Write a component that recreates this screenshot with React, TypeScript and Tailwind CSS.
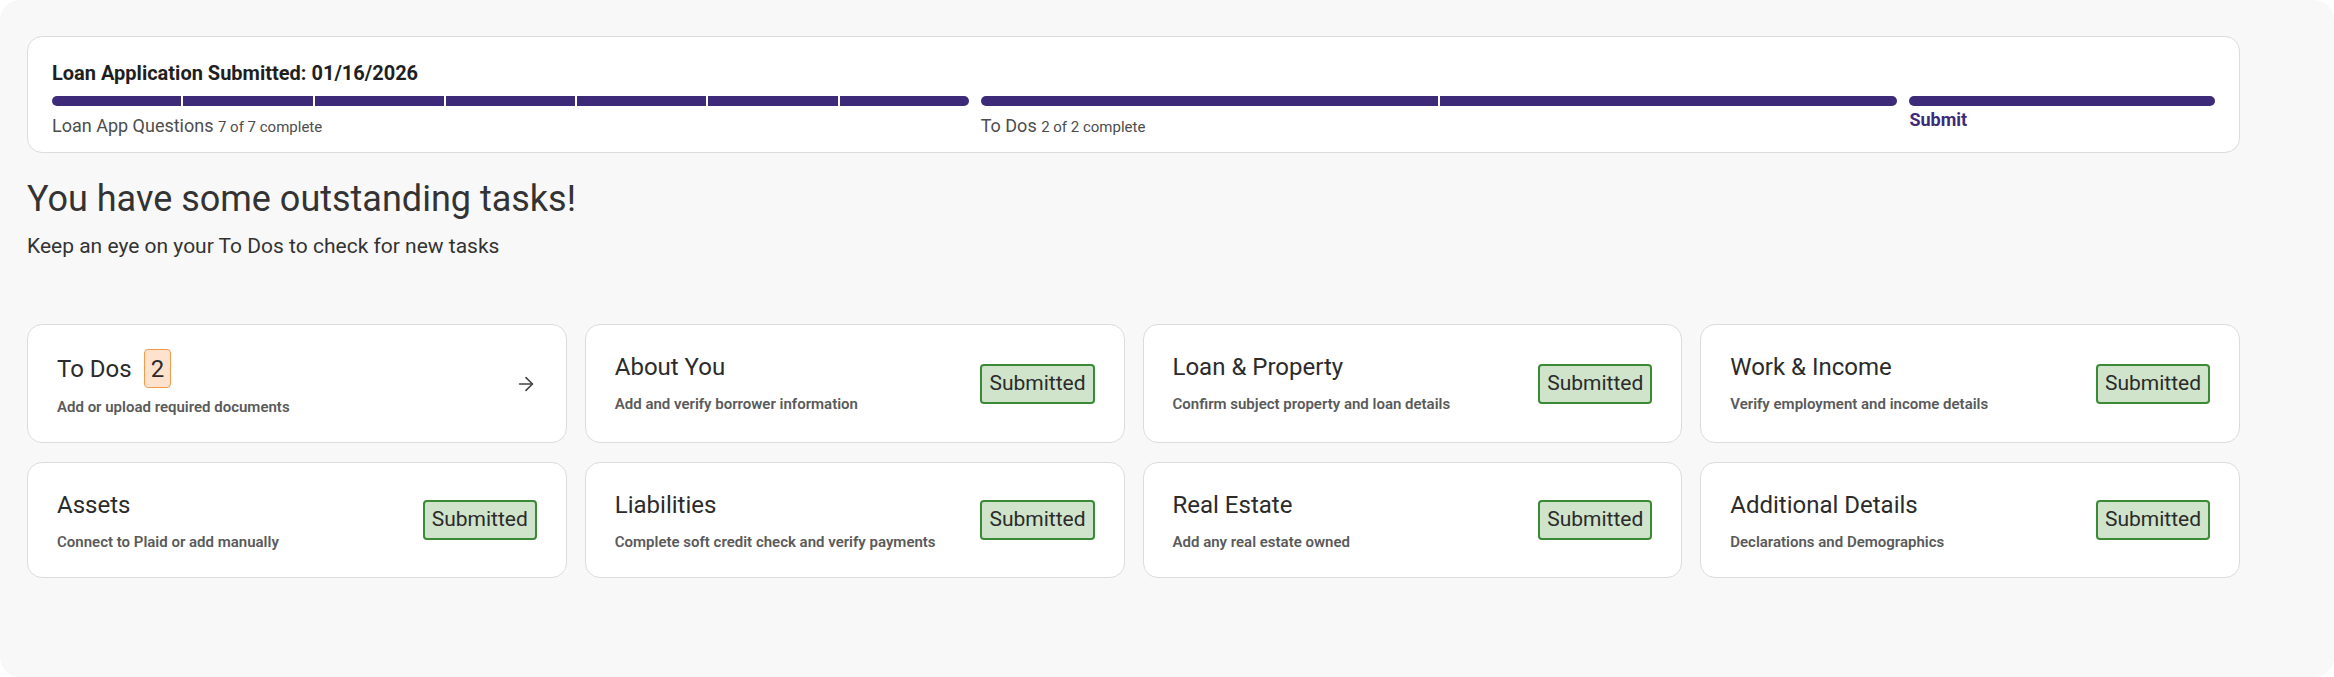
import React from 'react'
import { ArrowRight } from 'lucide-react'

interface TaskCardProps {
  title: string
  description: string
  count?: number
  submitted?: boolean
}

const ProgressTrack = ({ segments }: { segments: number }) => (
  <div className="flex h-[10px] gap-[2px] overflow-hidden rounded-full">
    {Array.from({ length: segments }).map((_, i) => (
      <div key={i} className="flex-1 bg-[#3d2b7a]" />
    ))}
  </div>
)

const TaskCard = ({ title, description, count, submitted }: TaskCardProps) => {
  return (
    <div className="flex items-center justify-between rounded-[15px] border border-[#dcdcdc] bg-white px-[29px] py-6">
      <div className="self-start">
        <div className="flex items-center">
          <span className="text-[24px] leading-9 text-[#2b2b2b]">{title}</span>
          {count !== undefined && (
            <span className="ml-3 flex h-[39px] items-center rounded-[4px] border border-[#f59a4c] bg-[#fde3cd] px-[6px] text-[24px] text-[#2b2b2b]">
              {count}
            </span>
          )}
        </div>
        <p className="mt-[8px] text-[15px] leading-[22px] font-semibold text-[#5a5a5a]">{description}</p>
      </div>

      {submitted ? (
        <span className="flex h-[40px] items-center rounded-[4px] border-2 border-[#3b8a36] bg-[#cfe4ca] px-[7px] text-[21px] text-[#2b2b2b]">
          Submitted
        </span>
      ) : (
        <ArrowRight size={22} strokeWidth={1.75} className="text-[#444]" />
      )}
    </div>
  )
}

const tasks: TaskCardProps[] = [
  { title: 'To Dos', description: 'Add or upload required documents', count: 2 },
  { title: 'About You', description: 'Add and verify borrower information', submitted: true },
  { title: 'Loan & Property', description: 'Confirm subject property and loan details', submitted: true },
  { title: 'Work & Income', description: 'Verify employment and income details', submitted: true },
  { title: 'Assets', description: 'Connect to Plaid or add manually', submitted: true },
  { title: 'Liabilities', description: 'Complete soft credit check and verify payments', submitted: true },
  { title: 'Real Estate', description: 'Add any real estate owned', submitted: true },
  { title: 'Additional Details', description: 'Declarations and Demographics', submitted: true }
]

export default function App() {
  return (
    <div className="min-h-screen bg-white font-[Roboto,sans-serif]">
      <div className="h-[677px] w-full rounded-[20px] bg-[#f8f8f8] pt-[36px] pl-[27px]">
        <div className="w-[2213px]">
          {/* Application progress */}
          <div className="rounded-[15px] border border-[#dcdcdc] bg-white px-6 pt-6 pb-[14px]">
            <h2 className="text-[20px] leading-6 font-bold text-[#1f1f1f]">
              Loan Application Submitted: 01/16/2026
            </h2>
            <div className="mt-[11px] grid grid-cols-[3fr_3fr_1fr] gap-3">
              <div>
                <ProgressTrack segments={7} />
                <p className="mt-[9px] text-[18px] leading-[22px] text-[#4d4d4d]">
                  Loan App Questions <span className="text-[15px]">7 of 7 complete</span>
                </p>
              </div>
              <div>
                <ProgressTrack segments={2} />
                <p className="mt-[9px] text-[18px] leading-[22px] text-[#4d4d4d]">
                  To Dos <span className="text-[15px]">2 of 2 complete</span>
                </p>
              </div>
              <div>
                <ProgressTrack segments={1} />
                <p className="mt-[3px] text-[18px] leading-[22px] font-bold text-[#3d2b7a]">Submit</p>
              </div>
            </div>
          </div>

          <h1 className="mt-[24px] text-[36px] leading-[44px] text-[#333]">You have some outstanding tasks!</h1>
          <p className="mt-[11px] text-[21px] leading-[28px] text-[#333]">
            Keep an eye on your To Dos to check for new tasks
          </p>

          {/* Task cards */}
          <div className="mt-[64px] grid grid-cols-4 gap-x-[18px] gap-y-[19px]">
            {tasks.map((task) => (
              <TaskCard key={task.title} {...task} />
            ))}
          </div>
        </div>
      </div>
    </div>
  )
}
